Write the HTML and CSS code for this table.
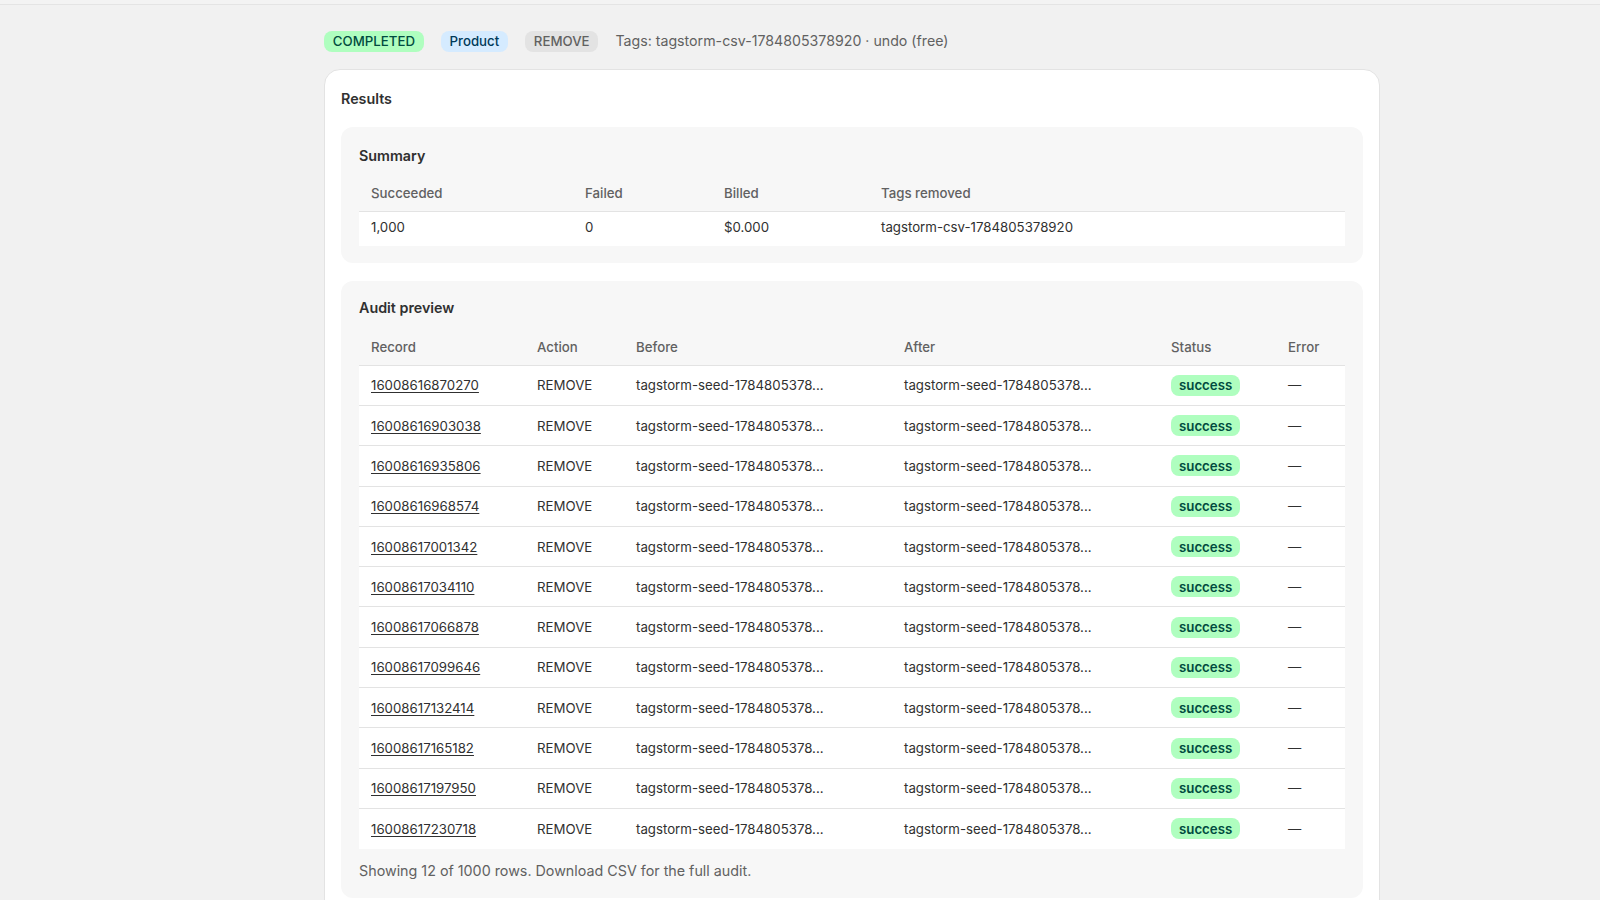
FILE: index.html
```html
<!DOCTYPE html>
<html lang="en">
<head>
<meta charset="utf-8">
<title>Results</title>
<link rel="stylesheet" href="styles.css">
</head>
<body>
<div class="topbar"></div>
<main class="page">
  <div class="meta">
    <span class="badge badge-success">COMPLETED</span>
    <span class="badge badge-info">Product</span>
    <span class="badge badge-neutral">REMOVE</span>
    <span class="meta-text">Tags: tagstorm-csv-1784805378920 · undo (free)</span>
  </div>
  <section class="card">
    <h2 class="card-title">Results</h2>
    <div class="panel panel-summary">
      <h3 class="panel-title">Summary</h3>
      <table class="tbl tbl-summary">
        <colgroup>
          <col class="c-succ"><col class="c-fail"><col class="c-bill"><col>
        </colgroup>
        <thead>
          <tr><th>Succeeded</th><th>Failed</th><th>Billed</th><th>Tags removed</th></tr>
        </thead>
        <tbody>
          <tr><td>1,000</td><td>0</td><td>$0.000</td><td>tagstorm-csv-1784805378920</td></tr>
        </tbody>
      </table>
    </div>
    <div class="panel panel-audit">
      <h3 class="panel-title">Audit preview</h3>
      <table class="tbl tbl-audit">
        <colgroup>
          <col class="c-rec"><col class="c-act"><col class="c-bef"><col class="c-aft"><col class="c-stat"><col>
        </colgroup>
        <thead>
          <tr><th>Record</th><th>Action</th><th>Before</th><th>After</th><th>Status</th><th>Error</th></tr>
        </thead>
        <tbody>
          <tr><td><a href="#">16008616870270</a></td><td>REMOVE</td><td>tagstorm-seed-1784805378...</td><td>tagstorm-seed-1784805378...</td><td><span class="badge badge-success badge-lc">success</span></td><td class="dash">—</td></tr>
          <tr><td><a href="#">16008616903038</a></td><td>REMOVE</td><td>tagstorm-seed-1784805378...</td><td>tagstorm-seed-1784805378...</td><td><span class="badge badge-success badge-lc">success</span></td><td class="dash">—</td></tr>
          <tr><td><a href="#">16008616935806</a></td><td>REMOVE</td><td>tagstorm-seed-1784805378...</td><td>tagstorm-seed-1784805378...</td><td><span class="badge badge-success badge-lc">success</span></td><td class="dash">—</td></tr>
          <tr><td><a href="#">16008616968574</a></td><td>REMOVE</td><td>tagstorm-seed-1784805378...</td><td>tagstorm-seed-1784805378...</td><td><span class="badge badge-success badge-lc">success</span></td><td class="dash">—</td></tr>
          <tr><td><a href="#">16008617001342</a></td><td>REMOVE</td><td>tagstorm-seed-1784805378...</td><td>tagstorm-seed-1784805378...</td><td><span class="badge badge-success badge-lc">success</span></td><td class="dash">—</td></tr>
          <tr><td><a href="#">16008617034110</a></td><td>REMOVE</td><td>tagstorm-seed-1784805378...</td><td>tagstorm-seed-1784805378...</td><td><span class="badge badge-success badge-lc">success</span></td><td class="dash">—</td></tr>
          <tr><td><a href="#">16008617066878</a></td><td>REMOVE</td><td>tagstorm-seed-1784805378...</td><td>tagstorm-seed-1784805378...</td><td><span class="badge badge-success badge-lc">success</span></td><td class="dash">—</td></tr>
          <tr><td><a href="#">16008617099646</a></td><td>REMOVE</td><td>tagstorm-seed-1784805378...</td><td>tagstorm-seed-1784805378...</td><td><span class="badge badge-success badge-lc">success</span></td><td class="dash">—</td></tr>
          <tr><td><a href="#">16008617132414</a></td><td>REMOVE</td><td>tagstorm-seed-1784805378...</td><td>tagstorm-seed-1784805378...</td><td><span class="badge badge-success badge-lc">success</span></td><td class="dash">—</td></tr>
          <tr><td><a href="#">16008617165182</a></td><td>REMOVE</td><td>tagstorm-seed-1784805378...</td><td>tagstorm-seed-1784805378...</td><td><span class="badge badge-success badge-lc">success</span></td><td class="dash">—</td></tr>
          <tr><td><a href="#">16008617197950</a></td><td>REMOVE</td><td>tagstorm-seed-1784805378...</td><td>tagstorm-seed-1784805378...</td><td><span class="badge badge-success badge-lc">success</span></td><td class="dash">—</td></tr>
          <tr><td><a href="#">16008617230718</a></td><td>REMOVE</td><td>tagstorm-seed-1784805378...</td><td>tagstorm-seed-1784805378...</td><td><span class="badge badge-success badge-lc">success</span></td><td class="dash">—</td></tr>
        </tbody>
      </table>
      <p class="note">Showing 12 of 1000 rows. Download CSV for the full audit.</p>
    </div>
  </section>
</main>
</body>
</html>
```

FILE: styles.css
```css
* { box-sizing: border-box; }
html, body { margin: 0; padding: 0; }
body {
  background: #f1f1f1;
  font-family: Inter, "Noto Sans", "Liberation Sans", sans-serif;
  font-size: 13.25px;
  line-height: 20px;
  color: #303030;
  overflow: hidden;
  height: 900px;
}
.topbar {
  height: 5px;
  background: #f3f3f3;
  border-bottom: 1px solid #e4e4e4;
}
.page {
  width: 1056px;
  margin-left: 324px;
  padding-top: 25px;
}
.meta {
  display: flex;
  align-items: center;
  gap: 17px;
  height: 22px;
}
.badge {
  display: inline-flex;
  align-items: center;
  height: 21px;
  padding: 0 8.8px;
  border-radius: 8px;
  font-size: 13.25px;
  font-weight: 500;
  line-height: 20px;
  white-space: nowrap;
}
.badge-success { background: #affebf; color: #014b40; }
.badge-info { background: #d5ebff; color: #003a5a; }
.badge-neutral { background: #e3e3e3; color: #616161; }
.badge-lc { font-weight: 600; padding: 0 8px; }
.meta-text {
  font-size: 14.2px;
  color: #616161;
}
.card {
  margin-top: 17px;
  background: #ffffff;
  border: 1px solid #e3e3e3;
  border-radius: 16px;
  padding: 18.5px 16px 16px;
  display: flex;
  flex-direction: column;
  min-height: 900px;
}
.card-title {
  margin: 0 0 18.5px;
  font-size: 14.3px;
  font-weight: 600;
  line-height: 20px;
  color: #303030;
}
.panel {
  background: #f7f7f7;
  border-radius: 12px;
  padding: 17px 18px 16.5px;
}
.panel-summary { padding-top: 18.5px; }
.panel-summary .panel-title { margin-bottom: 10.5px; }
.panel-audit {
  margin-top: 18.4px;
  padding-top: 17.3px;
}
.panel-title {
  margin: 0 0 12px;
  font-size: 14.3px;
  font-weight: 600;
  line-height: 20px;
  color: #303030;
}
.tbl {
  width: 100%;
  border-collapse: collapse;
  table-layout: fixed;
}
.tbl th {
  text-align: left;
  font-weight: 500;
  color: #616161;
  padding: 7px 12px;
  height: 35px;
  border-bottom: 1px solid #e3e3e3;
  white-space: nowrap;
}
.tbl td {
  background: #ffffff;
  padding: 0 12px;
  white-space: nowrap;
  color: #303030;
}
.tbl-summary td {
  height: 35px;
  vertical-align: top;
  padding-top: 5px;
}
.tbl-audit td { height: 40.3px; }
.tbl-audit tbody tr + tr td { border-top: 1px solid #e3e3e3; }
.tbl td a {
  color: #303030;
  text-decoration: underline;
  text-underline-offset: 2px;
}
.dash { color: #8a8a8a; }
.c-succ { width: 214px; }
.c-fail { width: 139px; }
.c-bill { width: 157px; }
.c-rec { width: 166px; }
.c-act { width: 99px; }
.c-bef { width: 268px; }
.c-aft { width: 267px; }
.c-stat { width: 117px; }
.note {
  margin: 12.4px 0 0;
  font-size: 14.3px;
  color: #616161;
}
```
